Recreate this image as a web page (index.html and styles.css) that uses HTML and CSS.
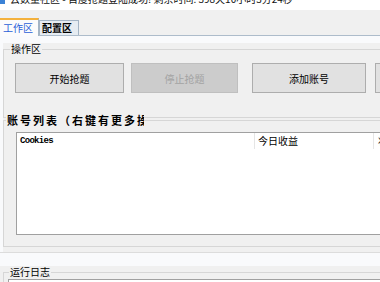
FILE: index.html
```html
<!DOCTYPE html>
<html lang="zh-CN">
<head>
    <meta charset="UTF-8">
    <title>云数量社区</title>
    <link rel="stylesheet" href="styles.css">
</head>
<body>
    <div class="window">
        <!-- Title bar (cut off at the top of the capture) -->
        <div class="titlebar">
            <span class="app-icon"></span>
            <span class="title-text">云数量社区 - 百度抢题登陆成功! 剩余时间: 398天10小时3分24秒</span>
        </div>

        <!-- Tab strip -->
        <div class="tabs">
            <div class="tab active">工作区</div>
            <div class="tab">配置区</div>
        </div>

        <div class="tab-page">
            <div class="panel">
                <fieldset class="group">
                    <legend class="group-label">操作区</legend>
                    <div class="button-row">
                        <button class="btn btn-start">开始抢题</button>
                        <button class="btn btn-stop" disabled>停止抢题</button>
                        <button class="btn btn-add">添加账号</button>
                        <button class="btn btn-more">导入账号</button>
                    </div>
                </fieldset>

                <fieldset class="group group-accounts">
                    <legend class="group-label label-bold"><span>账号列表（右键有更多操作）</span></legend>
                    <div class="list-wrap">
                        <div class="listview">
                            <div class="list-header">
                                <div class="col col-cookies">Cookies</div>
                                <div class="col col-income">今日收益</div>
                                <div class="col col-status">状态</div>
                            </div>
                        </div>
                    </div>
                </fieldset>
            </div>
        </div>

        <div class="log-area">
            <fieldset class="group group-log">
                <legend class="group-label label-log">运行日志</legend>
                <div class="log-box"></div>
            </fieldset>
        </div>
    </div>
</body>
</html>
```

FILE: styles.css
```css
/* Window */
body {
    margin: 0;
    background-color: #f9fafc;
    font-family: "Noto Sans CJK SC", "Noto Sans", sans-serif;
    font-size: 10px;
    color: #000;
}

.window {
    width: 380px;
    height: 282px;
    overflow: hidden;
}

.titlebar {
    height: 10px;
    background-color: #fff;
    overflow: hidden;
    display: flex;
    white-space: nowrap;
}

.app-icon {
    width: 5px;
    height: 4px;
    background-color: #3b82d6;
    flex-shrink: 0;
}

.title-text {
    margin-left: 5px;
    margin-top: -7px;
    line-height: 12px;
    color: #111;
}

/* Tabs */
.tabs {
    height: 25px;
    display: flex;
    align-items: flex-end;
    background-color: #f0f0f0;
    border-bottom: 1px solid #adbccb;
}

.tab {
    height: 14px;
    width: 36px;
    line-height: 14px;
    padding-left: 2px;
    background-color: #e6ecf2;
    border: 1px solid #a3b4c5;
    border-bottom: none;
    font-weight: bold;
}

.tab.active {
    height: 16px;
    line-height: 16px;
    width: 35px;
    padding-left: 3px;
    margin-bottom: -1px;
    background-color: #fbfbfc;
    border-top: 2px solid #f4b13c;
    border-left: none;
    color: #2a5fd8;
    font-weight: normal;
}

/* Tab page */
.tab-page {
    padding: 7px 0 0 3px;
    border-bottom: 1px solid #dcdcdc;
}

.panel {
    background-color: #f0f0f0;
    width: 420px;
    padding-bottom: 5px;
}

.group {
    margin: 0;
    padding: 0;
    min-width: 0;
    border: 1px solid #d6d6d6;
    width: 420px;
    box-sizing: border-box;
}

.group-label {
    padding: 0 1px;
    margin-left: 6px;
    line-height: 12px;
    background-color: #f0f0f0;
}

.button-row {
    display: flex;
    padding: 8px 0 24px 11px;
}

.btn {
    flex-shrink: 0;
    height: 30px;
    padding: 0;
    background-color: #e1e1e1;
    border: 1px solid #adadad;
    font-family: inherit;
    font-size: 10px;
    color: #000;
}

.btn-start { width: 109px; }
.btn-stop { width: 107px; margin-left: 7px; }
.btn-add { width: 114px; margin-left: 14px; }
.btn-more { width: 110px; margin-left: 9px; }

.btn-stop {
    background-color: #cccccc;
    border-color: #bfbfbf;
    color: #a3a3a3;
}

/* Account list */
.group-accounts {
    margin-top: -4px;
}

.label-bold {
    margin-left: 2px;
    font-size: 11px;
    font-weight: bold;
    letter-spacing: 2px;
    width: 136px;
    overflow: hidden;
    white-space: nowrap;
}

.list-wrap {
    padding: 6px 0 11px 12px;
}

.listview {
    height: 101px;
    background-color: #fff;
    border: 1px solid #a0a0a0;
    overflow: hidden;
}

.list-header {
    display: flex;
    height: 16px;
    line-height: 16px;
}

.col {
    flex-shrink: 0;
    padding-left: 3px;
    border-right: 1px solid #e5e5e5;
    white-space: nowrap;
}

.col-cookies {
    width: 234px;
    font-family: "Liberation Mono", monospace;
    font-size: 9px;
    font-weight: bold;
    letter-spacing: -0.7px;
}

.col-income { width: 115px; }
.col-status { width: 60px; border-right: none; padding-left: 4px; }

/* Log */
.log-area {
    margin-top: 13px;
    padding-left: 3px;
    background-color: #f0f0f0;
}

.label-log {
    margin-left: 5px;
}

.log-box {
    margin: 1px 0 0 4px;
    height: 20px;
    background-color: #fff;
    border: 1px solid #a0a0a0;
}
```
